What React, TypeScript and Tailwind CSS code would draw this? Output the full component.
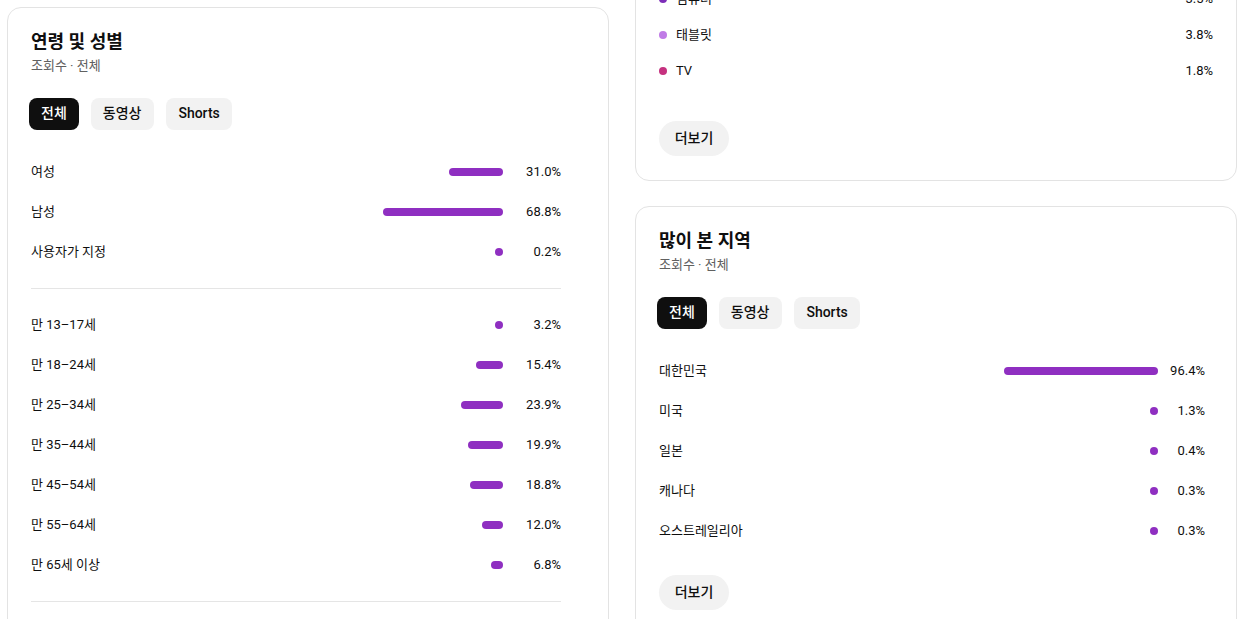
import React from "react";

type Row = { label: string; pct: number };

const gender: Row[] = [
  { label: "여성", pct: 31.0 },
  { label: "남성", pct: 68.8 },
  { label: "사용자가 지정", pct: 0.2 },
];

const ages: Row[] = [
  { label: "만 13–17세", pct: 3.2 },
  { label: "만 18–24세", pct: 15.4 },
  { label: "만 25–34세", pct: 23.9 },
  { label: "만 35–44세", pct: 19.9 },
  { label: "만 45–54세", pct: 18.8 },
  { label: "만 55–64세", pct: 12.0 },
  { label: "만 65세 이상", pct: 6.8 },
];

const regions: Row[] = [
  { label: "대한민국", pct: 96.4 },
  { label: "미국", pct: 1.3 },
  { label: "일본", pct: 0.4 },
  { label: "캐나다", pct: 0.3 },
  { label: "오스트레일리아", pct: 0.3 },
];

const devices = [
  { label: "휴대전화", pct: "90.9%", dot: "bg-[#5b1f9a]" },
  { label: "컴퓨터", pct: "3.5%", dot: "bg-[#7d2db8]" },
  { label: "태블릿", pct: "3.8%", dot: "bg-[#c07be6]" },
  { label: "TV", pct: "1.8%", dot: "bg-[#c5317f]" },
];

function Chips() {
  return (
    <div className="mt-[23px] -ml-[2px] flex gap-[12px]">
      <div className="flex h-[32px] items-center rounded-[8px] bg-[#0f0f0f] px-[12px] pb-[2px] text-[14px] font-medium text-white">
        전체
      </div>
      <div className="flex h-[32px] items-center rounded-[8px] bg-[#f2f2f2] pb-[2px] pl-[12px] pr-[13px] text-[14px] font-medium text-[#0f0f0f]">
        동영상
      </div>
      <div className="flex h-[32px] items-center rounded-[8px] bg-[#f2f2f2] px-[12px] pb-[2px] text-[14px] font-medium text-[#0f0f0f]">
        Shorts
      </div>
    </div>
  );
}

function Header({ title }: { title: string }) {
  return (
    <div>
      <div className="h-[26px] text-[18px] font-bold leading-[26px] text-[#0f0f0f]">{title}</div>
      <div className="mt-[2px] h-[18px] text-[13px] leading-[18px] text-[#606060]">조회수 · 전체</div>
    </div>
  );
}

function BarRow({
  row,
  scale,
  pctClass,
}: {
  row: Row;
  scale: number;
  pctClass: string;
}) {
  const w = Math.max(8, Math.round(row.pct * scale));
  return (
    <div className="flex h-[40px] items-center text-[13px] text-[#0f0f0f]">
      <div className="flex-1">{row.label}</div>
      <div className="h-[8px] rounded-full bg-[#8f2fc1]" style={{ width: w }} />
      <div className={pctClass}>{row.pct.toFixed(1)}%</div>
    </div>
  );
}

export default function App() {
  return (
    <div className="flex items-start gap-[26px] bg-white pl-[7px] pt-[7px] font-['Roboto','Noto_Sans_CJK_KR',sans-serif]">
      {/* Left card */}
      <div className="w-[602px] rounded-[14px] border border-[#e3e3e3] pb-[60px] pl-[23px] pr-[47px] pt-[21px]">
        <Header title="연령 및 성별" />
        <Chips />
        <div className="mt-[22px]">
          {gender.map((r) => (
            <BarRow key={r.label} row={r} scale={1.745} pctClass="ml-[10px] w-[48px] text-right" />
          ))}
        </div>
        <div className="mt-[16px] h-px bg-[#e5e5e5]" />
        <div className="mt-[16px]">
          {ages.map((r) => (
            <BarRow key={r.label} row={r} scale={1.745} pctClass="ml-[10px] w-[48px] text-right" />
          ))}
        </div>
        <div className="mt-[16px] h-px bg-[#e5e5e5]" />
      </div>

      {/* Right column */}
      <div className="-mt-[210px] flex w-[602px] flex-col gap-[25px]">
        <div className="rounded-[14px] border border-[#e3e3e3] pb-[24px] pl-[23px] pr-[23px] pt-[23px]">
          <Header title="기기 유형" />
          <Chips />
          <div className="mt-[23px]">
            {devices.map((d) => (
              <div key={d.label} className="flex h-[36px] items-center text-[13px] text-[#0f0f0f]">
                <div className={`h-[8px] w-[8px] rounded-full ${d.dot}`} />
                <div className="ml-[9px] flex-1">{d.label}</div>
                <div>{d.pct}</div>
              </div>
            ))}
          </div>
          <div className="mt-[32px] flex h-[35px] w-[70px] items-center justify-center rounded-full bg-[#f2f2f2] text-[14px] font-medium text-[#0f0f0f]">
            더보기
          </div>
        </div>

        <div className="rounded-[14px] border border-[#e3e3e3] pb-[40px] pl-[23px] pr-[31px] pt-[21px]">
          <Header title="많이 본 지역" />
          <Chips />
          <div className="mt-[22px]">
            {regions.map((r) => (
              <BarRow key={r.label} row={r} scale={1.6} pctClass="ml-[7px] w-[40px] text-right" />
            ))}
          </div>
          <div className="mt-[24px] flex h-[35px] w-[70px] items-center justify-center rounded-full bg-[#f2f2f2] text-[14px] font-medium text-[#0f0f0f]">
            더보기
          </div>
        </div>
      </div>
    </div>
  );
}
